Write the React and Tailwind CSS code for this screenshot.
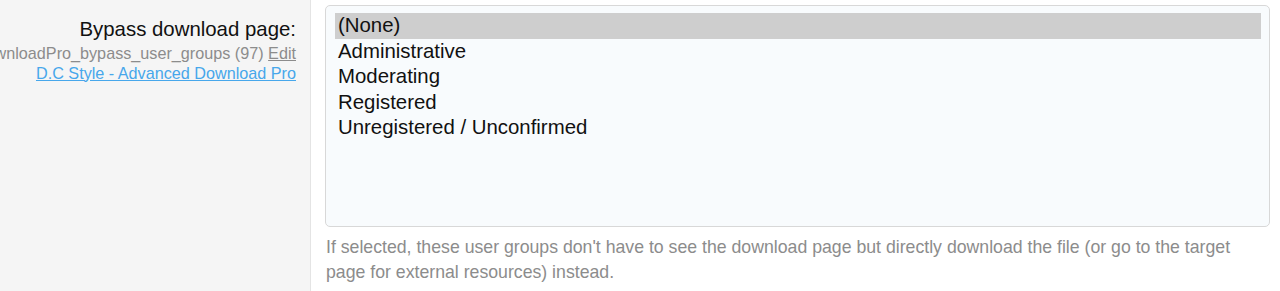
import React from 'react';

const groups = ['(None)', 'Administrative', 'Moderating', 'Registered', 'Unregistered / Unconfirmed'];

function App() {
  const selected = 0;

  return (
    <div className="flex h-[291px] w-full overflow-hidden bg-white font-['Liberation_Sans',Arial,sans-serif]">
      {/* label column */}
      <div className="w-[311px] shrink-0 overflow-hidden border-r border-[#e4e4e4] bg-[#f5f5f5] pr-[14px] pt-[16px] text-right">
        <div className="text-[20.4px] leading-[26px] text-[#111]">Bypass download page:</div>
        <div className="mt-[2px] flex justify-end whitespace-nowrap text-[16.2px] leading-[19.5px] text-[#8c8c8c]">
          <span>
            dcAdvancedDownloadPro_bypass_user_groups (97){' '}
            <a href="#" className="underline">Edit</a>
          </span>
        </div>
        <div className="flex justify-end whitespace-nowrap text-[16.2px] leading-[19.5px]">
          <a href="#" className="text-[#47a7eb] underline">D.C Style - Advanced Download Pro</a>
        </div>
      </div>

      {/* input column */}
      <div className="min-w-0 flex-1 pl-[14px] pr-[10px] pt-[5px]">
        <div className="h-[222px] rounded-[5px] border border-[#d8d8d8] bg-[#f8fbfd] pb-[8px] pl-[9px] pr-[8px] pt-[7px]">
          {groups.map((g, i) => (
            <div
              key={g}
              className={
                'h-[25.5px] pl-[3px] text-[20.4px] leading-[25.5px] text-[#111] ' +
                (i === selected ? 'bg-[#cecece]' : '')
              }
            >
              {g}
            </div>
          ))}
        </div>
        <p className="mt-[8px] pl-[1px] text-[17.7px] leading-[25px] text-[#8c8c8c]">
          If selected, these user groups don't have to see the download page but directly download the file (or go to the target
          page for external resources) instead.
        </p>
      </div>
    </div>
  );
}

export default App;
